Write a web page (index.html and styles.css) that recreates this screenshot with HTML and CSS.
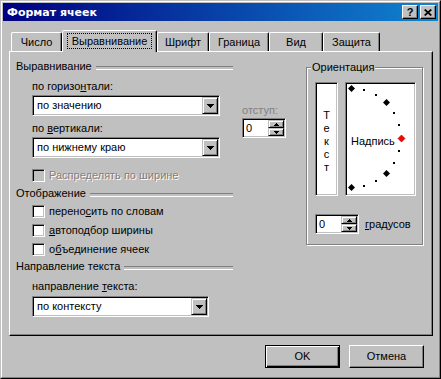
FILE: index.html
```html
<!DOCTYPE html>
<html lang="ru">
<head>
    <meta charset="UTF-8">
    <title>Формат ячеек</title>
    <link rel="stylesheet" href="styles.css">
</head>
<body>
<div class="window">
  <div class="frame">
    <div class="titlebar">
      <span class="title">Формат ячеек</span>
      <span class="cap-btn">?</span>
      <span class="cap-btn"><svg width="8" height="7" viewBox="0 0 8 7"><path d="M0.7 0.5L7.3 6.5M7.3 0.5L0.7 6.5" stroke="#000" stroke-width="1.7"/></svg></span>
    </div>

    <div class="tabs">
      <div class="tab tab-num">Число</div>
      <div class="tab tab-align active"><span class="focus">Выравнивание</span></div>
      <div class="tab tab-font">Шрифт</div>
      <div class="tab tab-border">Граница</div>
      <div class="tab tab-view">Вид</div>
      <div class="tab tab-protect">Защита</div>
    </div>

    <div class="panel">
      <div class="col-left">
        <div class="group-head">Выравнивание</div>
        <div class="field-label first">по горизо<u>н</u>тали:</div>
        <div class="combo">
          <span class="combo-text">по значению</span>
          <span class="combo-btn"><svg width="7" height="4"><path d="M0 0H7V1H6V2H5V3H4V4H3V3H2V2H1V1H0Z"/></svg></span>
        </div>
        <div class="field-label">по <u>в</u>ертикали:</div>
        <div class="combo">
          <span class="combo-text">по нижнему краю</span>
          <span class="combo-btn"><svg width="7" height="4"><path d="M0 0H7V1H6V2H5V3H4V4H3V3H2V2H1V1H0Z"/></svg></span>
        </div>
        <div class="check disabled distribute"><span class="box"></span>Распределять по ширине</div>

        <div class="group-head display-head">Отображение</div>
        <div class="check wrap"><span class="box"></span>перено<u>с</u>ить по словам</div>
        <div class="check"><span class="box"></span><u>а</u>втоподбор ширины</div>
        <div class="check"><span class="box"></span>о<u>б</u>ъединение ячеек</div>

        <div class="group-head direction-head">Направление текста</div>
        <div class="field-label first">направление <u>т</u>екста:</div>
        <div class="combo short">
          <span class="combo-text">по контексту</span>
          <span class="combo-btn"><svg width="7" height="4"><path d="M0 0H7V1H6V2H5V3H4V4H3V3H2V2H1V1H0Z"/></svg></span>
        </div>
      </div>

      <div class="col-mid">
        <div class="indent-label">отступ:</div>
        <div class="spin">
          <span class="spin-val">0</span>
          <span class="spin-btns">
            <span class="spin-btn"><svg width="5" height="3"><path d="M2 0H3V1H4V2H5V3H0V2H1V1H2Z"/></svg></span>
            <span class="spin-btn"><svg width="5" height="3"><path d="M0 0H5V1H4V2H3V3H2V2H1V1H0Z"/></svg></span>
          </span>
        </div>
      </div>

      <div class="col-right">
        <div class="orient">
          <span class="orient-title">Ориентация</span>
          <div class="orient-boxes">
            <div class="vert-text">
              <span>Т</span><span>е</span><span>к</span><span>с</span><span>т</span>
            </div>
            <div class="dial">
              <svg width="67" height="110" viewBox="0 0 67 110">
                <g fill="#000" shape-rendering="crispEdges">
                  <rect x="16" y="5" width="2" height="2"/>
                  <rect x="28" y="10" width="2" height="2"/>
                  <rect x="46" y="28" width="2" height="2"/>
                  <rect x="51" y="40" width="2" height="2"/>
                  <rect x="51" y="66" width="2" height="2"/>
                  <rect x="46" y="78" width="2" height="2"/>
                  <rect x="28" y="96" width="2" height="2"/>
                  <rect x="16" y="101" width="2" height="2"/>
                </g>
                <g fill="#000">
                  <polygon points="4.5,1 8,4.5 4.5,8 1,4.5"/>
                  <polygon points="39.5,15 43,18.5 39.5,22 36,18.5"/>
                  <polygon points="39.5,86 43,89.5 39.5,93 36,89.5"/>
                  <polygon points="4.5,100 8,103.5 4.5,107 1,103.5"/>
                </g>
                <polygon points="54.5,51 58,54.5 54.5,58 51,54.5" fill="#ff0000" stroke="#a00000" stroke-width="0.6"/>
                <text x="4" y="61" font-family="Liberation Sans, Arial, sans-serif" font-size="11">Надпись</text>
              </svg>
            </div>
          </div>
          <div class="degrees">
            <div class="spin">
              <span class="spin-val">0</span>
              <span class="spin-btns">
                <span class="spin-btn"><svg width="5" height="3"><path d="M2 0H3V1H4V2H5V3H0V2H1V1H2Z"/></svg></span>
                <span class="spin-btn"><svg width="5" height="3"><path d="M0 0H5V1H4V2H3V3H2V2H1V1H0Z"/></svg></span>
              </span>
            </div>
            <span><u>г</u>радусов</span>
          </div>
        </div>
      </div>
    </div>

    <div class="dlg-buttons">
      <div class="btn default">OK</div>
      <div class="btn">Отмена</div>
    </div>
  </div>
</div>
</body>
</html>
```

FILE: styles.css
```css
* {
    box-sizing: border-box;
}
body {
    margin: 0;
    background: #c0c0c0;
    font-family: "Liberation Sans", Arial, sans-serif;
    font-size: 11px;
    line-height: 13px;
    color: #000;
}
u {
    text-decoration-thickness: 1px;
    text-underline-offset: 1px;
}

/* window frame */
.window {
    width: 441px;
    height: 379px;
    border: 1px solid;
    border-color: #c0c0c0 #000 #000 #c0c0c0;
}
.frame {
    height: 100%;
    border: 1px solid;
    border-color: #fff #808080 #808080 #fff;
    padding: 1px;
}

.titlebar {
    height: 18px;
    display: flex;
    align-items: center;
    padding: 0 2px 0 4px;
    background: linear-gradient(to right, #000080, #1084d0);
}
.title {
    flex: 1;
    color: #fff;
    font-family: "DejaVu Sans", Verdana, sans-serif;
    font-weight: bold;
    font-size: 11px;
}
.cap-btn {
    width: 16px;
    height: 14px;
    margin-left: 2px;
    display: flex;
    align-items: center;
    justify-content: center;
    background: #c0c0c0;
    border: 1px solid;
    border-color: #fff #000 #000 #fff;
    box-shadow: inset -1px -1px #808080;
    font-weight: bold;
    font-size: 11px;
}

/* tabs */
.tabs {
    display: flex;
    align-items: flex-end;
    height: 21px;
    margin-top: 9px;
    padding-left: 8px;
}
.tab {
    height: 19px;
    padding-top: 3px;
    text-align: center;
    border: 1px solid;
    border-bottom: none;
    border-color: #fff #000 transparent #fff;
    border-radius: 2px 2px 0 0;
    box-shadow: inset -1px 0 #808080;
}
.tab.active {
    height: 22px;
    margin-bottom: -1px;
    position: relative;
    z-index: 1;
    background: #c0c0c0;
    padding-top: 2px;
}
.tab-num { width: 51px; }
.tab-align { width: 95px; }
.tab-font { width: 52px; }
.tab-border { width: 60px; }
.tab-view { width: 54px; }
.tab-protect { width: 57px; }
.focus {
    display: inline-block;
    border: 1px dotted #000;
    padding: 0 4px;
    line-height: 14px;
}

/* panel */
.panel {
    display: flex;
    align-items: flex-start;
    margin-left: 6px;
    width: 424px;
    height: 285px;
    padding: 8px 0 0 6px;
    border: 1px solid;
    border-color: #fff #000 #000 #fff;
    box-shadow: inset -1px -1px #808080;
}
.col-left {
    width: 217px;
}
.col-mid {
    width: 44px;
    margin-left: 9px;
}
.col-right {
    width: 117px;
    margin-left: 20px;
}

.group-head {
    display: flex;
    align-items: center;
    height: 13px;
}
.group-head::after {
    content: "";
    flex: 1;
    height: 2px;
    margin: 2px 0 0 4px;
    border-top: 1px solid #808080;
    border-bottom: 1px solid #fff;
}
.display-head { margin-top: 5px; }
.direction-head { margin-top: 4px; }

.field-label {
    margin: 6px 0 0 16px;
}
.field-label.first {
    margin-top: 7px;
}

.combo {
    display: flex;
    align-items: center;
    width: 188px;
    height: 21px;
    margin: 2px 0 0 16px;
    background: #fff;
    border: 1px solid;
    border-color: #808080 #fff #fff #808080;
    box-shadow: inset 1px 1px #000, inset -1px -1px #c0c0c0;
    padding: 1px;
}
.combo.short {
    width: 177px;
    margin-top: 3px;
}
.combo-text {
    flex: 1;
    padding-left: 3px;
}
.combo-btn {
    width: 16px;
    height: 17px;
    display: flex;
    align-items: center;
    justify-content: center;
    background: #c0c0c0;
    border: 1px solid;
    border-color: #c0c0c0 #000 #000 #c0c0c0;
    box-shadow: inset 1px 1px #fff, inset -1px -1px #808080;
}

/* checkboxes */
.check {
    display: flex;
    align-items: center;
    height: 13px;
    margin: 6px 0 0 16px;
}
.check.distribute { margin-top: 11px; }
.check.wrap { margin-top: 5px; }
.box {
    width: 13px;
    height: 13px;
    margin-right: 4px;
    background: #fff;
    border: 1px solid;
    border-color: #808080 #fff #fff #808080;
    box-shadow: inset 1px 1px #000, inset -1px -1px #c0c0c0;
}
.disabled {
    color: #808080;
    text-shadow: 1px 1px #fff;
}
.disabled .box {
    background: #c0c0c0;
}

/* spin edit */
.indent-label {
    margin-top: 44px;
    color: #808080;
}
.spin {
    display: flex;
    width: 44px;
    height: 20px;
    margin-top: 1px;
    background: #fff;
    border: 1px solid;
    border-color: #808080 #fff #fff #808080;
    box-shadow: inset 1px 1px #000, inset -1px -1px #c0c0c0;
    padding: 1px;
}
.spin-val {
    flex: 1;
    padding-left: 2px;
    line-height: 16px;
}
.spin-btns {
    display: flex;
    flex-direction: column;
    width: 16px;
}
.spin-btn {
    height: 8px;
    display: flex;
    align-items: center;
    justify-content: center;
    background: #c0c0c0;
    border: 1px solid;
    border-color: #c0c0c0 #000 #000 #c0c0c0;
    box-shadow: inset 1px 1px #fff, inset -1px -1px #808080;
}

/* orientation group */
.orient {
    position: relative;
    height: 178px;
    margin-top: 7px;
    padding-top: 14px;
    border: 1px solid #808080;
    box-shadow: 1px 1px 0 #fff, inset 1px 1px 0 #fff;
}
.orient-title {
    position: absolute;
    top: -7px;
    left: 4px;
    padding: 0 1px;
    background: #c0c0c0;
}
.orient-boxes {
    display: flex;
    gap: 7px;
    margin-left: 8px;
}
.vert-text, .dial {
    height: 114px;
    background: #fff;
    border: 1px solid;
    border-color: #808080 #fff #fff #808080;
    box-shadow: inset 1px 1px #000, inset -1px -1px #c0c0c0;
    padding: 1px;
}
.vert-text {
    width: 23px;
    display: flex;
    flex-direction: column;
    align-items: center;
    justify-content: center;
    padding-top: 5px;
}
.dial {
    width: 71px;
}
.dial svg {
    display: block;
}
.degrees {
    display: flex;
    align-items: center;
    gap: 6px;
    margin: 18px 0 0 8px;
}
.degrees .spin {
    margin-top: 0;
}

/* dialog buttons */
.dlg-buttons {
    display: flex;
    justify-content: flex-end;
    gap: 9px;
    margin-top: 9px;
    padding-right: 14px;
}
.btn {
    width: 75px;
    height: 23px;
    display: flex;
    align-items: center;
    justify-content: center;
    border: 1px solid;
    border-color: #fff #000 #000 #fff;
    box-shadow: inset -1px -1px #808080;
}
.btn.default {
    border-color: #000;
    box-shadow: inset 1px 1px #fff, inset -1px -1px #000, inset -2px -2px #808080;
}
```
